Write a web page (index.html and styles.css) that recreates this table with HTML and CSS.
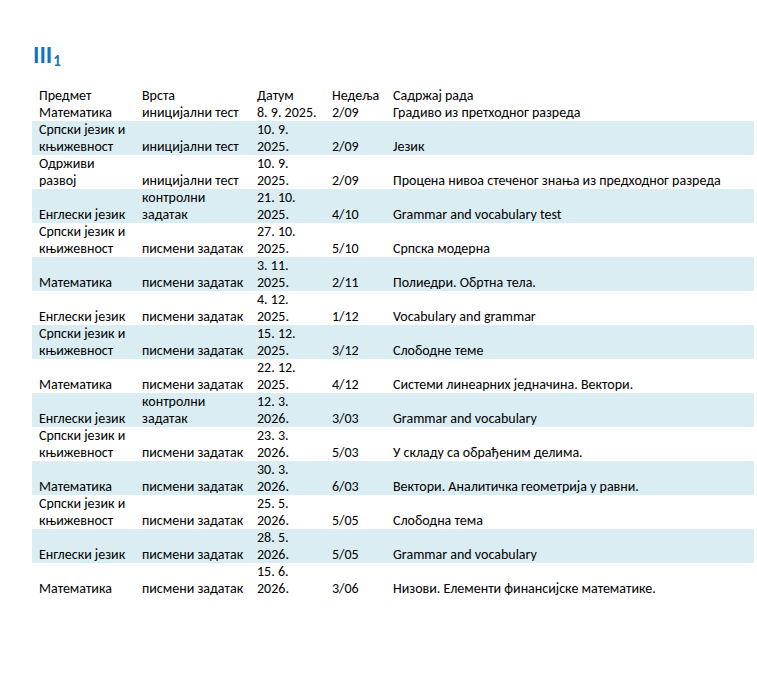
FILE: index.html
```html
<!DOCTYPE html>
<html lang="sr">
<head>
<meta charset="utf-8">
<title>III1</title>
<link rel="stylesheet" href="styles.css">
</head>
<body>
<div class="page">
  <h1 class="title">III<sub>1</sub></h1>
  <table class="plan">
    <colgroup>
      <col class="c1"><col class="c2"><col class="c3"><col class="c4"><col class="c5">
    </colgroup>
    <thead>
      <tr><th>Предмет</th><th>Врста</th><th>Датум</th><th>Недеља</th><th>Садржај рада</th></tr>
    </thead>
    <tbody>
      <tr><td>Математика</td><td>иницијални тест</td><td>8. 9. 2025.</td><td>2/09</td><td>Градиво из претходног разреда</td></tr>
      <tr class="alt"><td>Српски језик и<br>књижевност</td><td>иницијални тест</td><td>10. 9.<br>2025.</td><td>2/09</td><td>Језик</td></tr>
      <tr><td>Одрживи<br>развој</td><td>иницијални тест</td><td>10. 9.<br>2025.</td><td>2/09</td><td>Процена нивоа стеченог знања из предходног разреда</td></tr>
      <tr class="alt"><td>Енглески језик</td><td>контролни<br>задатак</td><td>21. 10.<br>2025.</td><td>4/10</td><td>Grammar and vocabulary test</td></tr>
      <tr><td>Српски језик и<br>књижевност</td><td>писмени задатак</td><td>27. 10.<br>2025.</td><td>5/10</td><td>Српска модерна</td></tr>
      <tr class="alt"><td>Математика</td><td>писмени задатак</td><td>3. 11.<br>2025.</td><td>2/11</td><td>Полиедри. Обртна тела.</td></tr>
      <tr><td>Енглески језик</td><td>писмени задатак</td><td>4. 12.<br>2025.</td><td>1/12</td><td>Vocabulary and grammar</td></tr>
      <tr class="alt"><td>Српски језик и<br>књижевност</td><td>писмени задатак</td><td>15. 12.<br>2025.</td><td>3/12</td><td>Слободне теме</td></tr>
      <tr><td>Математика</td><td>писмени задатак</td><td>22. 12.<br>2025.</td><td>4/12</td><td>Системи линеарних једначина. Вектори.</td></tr>
      <tr class="alt"><td>Енглески језик</td><td>контролни<br>задатак</td><td>12. 3.<br>2026.</td><td>3/03</td><td>Grammar and vocabulary</td></tr>
      <tr><td>Српски језик и<br>књижевност</td><td>писмени задатак</td><td>23. 3.<br>2026.</td><td>5/03</td><td>У складу са обрађеним делима.</td></tr>
      <tr class="alt"><td>Математика</td><td>писмени задатак</td><td>30. 3.<br>2026.</td><td>6/03</td><td>Вектори. Аналитичка геометрија у равни.</td></tr>
      <tr><td>Српски језик и<br>књижевност</td><td>писмени задатак</td><td>25. 5.<br>2026.</td><td>5/05</td><td>Слободна тема</td></tr>
      <tr class="alt"><td>Енглески језик</td><td>писмени задатак</td><td>28. 5.<br>2026.</td><td>5/05</td><td>Grammar and vocabulary</td></tr>
      <tr><td>Математика</td><td>писмени задатак</td><td>15. 6.<br>2026.</td><td>3/06</td><td>Низови. Елементи финансијске математике.</td></tr>
    </tbody>
  </table>
</div>
</body>
</html>
```

FILE: styles.css
```css
html, body {
  margin: 0;
  padding: 0;
  background: #ffffff;
}

.page {
  padding: 40px 3px 0 32px;
  font-family: Carlito, Calibri, Roboto, "Noto Sans", sans-serif;
  color: #000000;
}

.title {
  margin: 0 0 14px 1px;
  font-size: 24px;
  line-height: 29px;
  font-weight: bold;
  color: #1472c4;
}

.title sub {
  font-size: 15px;
  vertical-align: baseline;
  position: relative;
  top: 3px;
  margin-left: 1px;
}

.plan {
  border-collapse: collapse;
  table-layout: fixed;
  width: 722px;
  font-size: 14px;
  line-height: 17px;
}

.c1 { width: 103px; }
.c2 { width: 115px; }
.c3 { width: 75px; }
.c4 { width: 61px; }
.c5 { width: 368px; }

.plan th,
.plan td {
  padding: 0 0 0 7px;
  text-align: left;
  vertical-align: bottom;
  white-space: nowrap;
  font-weight: normal;
}

.plan tr.alt td {
  background: #daedf3;
}
```
